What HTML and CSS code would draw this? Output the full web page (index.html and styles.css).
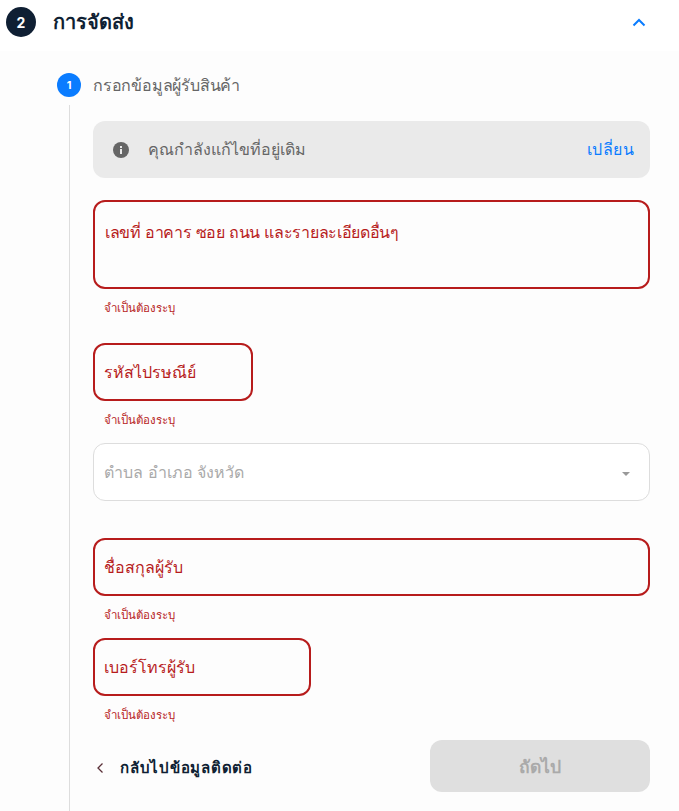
FILE: index.html
```html
<!DOCTYPE html>
<html lang="th">
<head>
    <meta charset="UTF-8">
    <meta name="viewport" content="width=device-width, initial-scale=1.0">
    <title>การจัดส่ง</title>
    <link rel="stylesheet" href="styles.css">
</head>
<body>
    <header class="head">
        <div class="head-left">
            <span class="num-main">2</span>
            <h1>การจัดส่ง</h1>
        </div>
        <svg class="chev-up" width="14" height="9" viewBox="0 0 14 9"><path d="M1.500 7.500 7 2l5.500 5.500" fill="none" stroke="#0a7cff" stroke-width="2"/></svg>
    </header>
    <section class="step">
        <div class="step-title">
            <span class="num-step">1</span>
            <span class="step-text">กรอกข้อมูลผู้รับสินค้า</span>
        </div>
        <div class="step-body">
            <div class="notice">
                <svg class="info" width="16" height="16" viewBox="0 0 16 16"><circle cx="8" cy="8" r="8" fill="#666"/><rect x="7" y="7" width="2" height="5" fill="#eaeaea"/><rect x="7" y="4" width="2" height="2" fill="#eaeaea"/></svg>
                <span class="notice-text">คุณกำลังแก้ไขที่อยู่เดิม</span>
                <a class="change">เปลี่ยน</a>
            </div>

            <div class="field field-area bad">เลขที่ อาคาร ซอย ถนน และรายละเอียดอื่นๆ</div>
            <p class="err">จำเป็นต้องระบุ</p>

            <div class="field field-zip bad">รหัสไปรษณีย์</div>
            <p class="err">จำเป็นต้องระบุ</p>

            <div class="field field-select">
                <span>ตำบล อำเภอ จังหวัด</span>
                <span class="caret"></span>
            </div>

            <div class="field field-name bad">ชื่อสกุลผู้รับ</div>
            <p class="err">จำเป็นต้องระบุ</p>

            <div class="field field-tel bad">เบอร์โทรผู้รับ</div>
            <p class="err">จำเป็นต้องระบุ</p>

            <div class="actions">
                <a class="back">
                    <svg width="8" height="12" viewBox="0 0 8 12"><path d="M6.500 1.500 2 6l4.500 4.500" fill="none" stroke="#5a3038" stroke-width="1.300"/></svg>
                    กลับไปข้อมูลติดต่อ
                </a>
                <button class="next" disabled>ถัดไป</button>
            </div>
        </div>
    </section>
</body>
</html>
```

FILE: styles.css
```css
* {
    margin: 0px;
    padding: 0px;
    box-sizing: border-box;
}

html, body {
    height: 811px;
    overflow: hidden;
}

body {
    background-color: #fdfdfd;
    font-family: Inter, "Noto Sans", sans-serif;
    color: #0f1f33;
}

.head {
    height: 51px;
    background-color: #fff;
    padding: 6px 33px 0px 6px;
    display: flex;
    justify-content: space-between;
    align-items: flex-start;
}

.head-left {
    display: flex;
    align-items: center;
    gap: 17px;
}

.num-main {
    width: 30px;
    height: 30px;
    border-radius: 50%;
    background-color: #0f1f33;
    color: #fff;
    font-size: 14px;
    font-weight: 700;
    display: flex;
    justify-content: center;
    align-items: center;
}

h1 {
    font-size: 20px;
    font-weight: 800;
    color: #0f1f33;
}

.chev-up {
    margin-top: 12px;
}

.step {
    padding: 22px 29px 0px 57px;
}

.step-title {
    display: flex;
    align-items: center;
    gap: 12px;
    height: 24px;
}

.num-step {
    width: 24px;
    height: 24px;
    border-radius: 50%;
    background-color: #0a7cff;
    color: #fff;
    font-size: 11px;
    font-weight: 700;
    display: flex;
    justify-content: center;
    align-items: center;
}

.step-text {
    font-size: 16px;
    color: #666;
    letter-spacing: -0.200px;
}

.step-body {
    margin-left: 12px;
    margin-top: 8px;
    border-left: 1px solid #ddd;
    padding: 16px 0px 40px 23px;
    height: 706px;
}

.notice {
    background-color: #eaeaea;
    border-radius: 12px;
    height: 57px;
    display: flex;
    align-items: center;
    padding: 0px 16px 0px 20px;
}

.notice-text {
    margin-left: 19px;
    flex: 1;
    font-size: 16px;
    color: #666;
}

.change {
    font-size: 16px;
    color: #0a7cff;
    letter-spacing: 0.450px;
}

.info {
    flex-shrink: 0;
}

.field {
    border-radius: 12px;
    font-size: 16px;
    padding: 0px 9px;
    display: flex;
    align-items: center;
}

.bad {
    border: 2px solid #b71c1c;
    color: #b71c1c;
}

.field-area {
    margin-top: 22px;
    height: 89px;
    align-items: flex-start;
    padding-top: 18px;
    padding-left: 10px;
    letter-spacing: -0.300px;
}

.field-zip {
    margin-top: 25px;
    width: 160px;
    height: 58px;
}

.field-select {
    margin-top: 13px;
    height: 58px;
    border: 1px solid #ddd;
    background-color: #fff;
    color: #aaa;
    justify-content: space-between;
    padding-left: 10px;
    padding-right: 19px;
}

.caret {
    width: 0px;
    height: 0px;
    margin-top: 4px;
    border-left: 4px solid transparent;
    border-right: 4px solid transparent;
    border-top: 4px solid #999;
}

.field-name {
    margin-top: 37px;
    height: 58px;
}

.field-tel {
    margin-top: 13px;
    width: 218px;
    height: 58px;
}

.err {
    font-size: 11.500px;
    color: #b71c1c;
    padding-left: 11px;
    padding-bottom: 2px;
    margin-top: 11px;
    line-height: 16px;
}

.actions {
    margin-top: 15px;
    display: flex;
    justify-content: space-between;
    align-items: center;
}

.back {
    display: flex;
    align-items: center;
    gap: 16px;
    padding-left: 3px;
    padding-top: 3px;
    font-size: 15px;
    font-weight: 600;
    color: #0f1f33;
    letter-spacing: 0.750px;
}

.next {
    width: 220px;
    height: 52px;
    border: none;
    border-radius: 12px;
    padding-top: 2px;
    background-color: #dfdfdf;
    color: #aaa;
    font-family: inherit;
    font-size: 17.500px;
    font-weight: 600;
}
```
